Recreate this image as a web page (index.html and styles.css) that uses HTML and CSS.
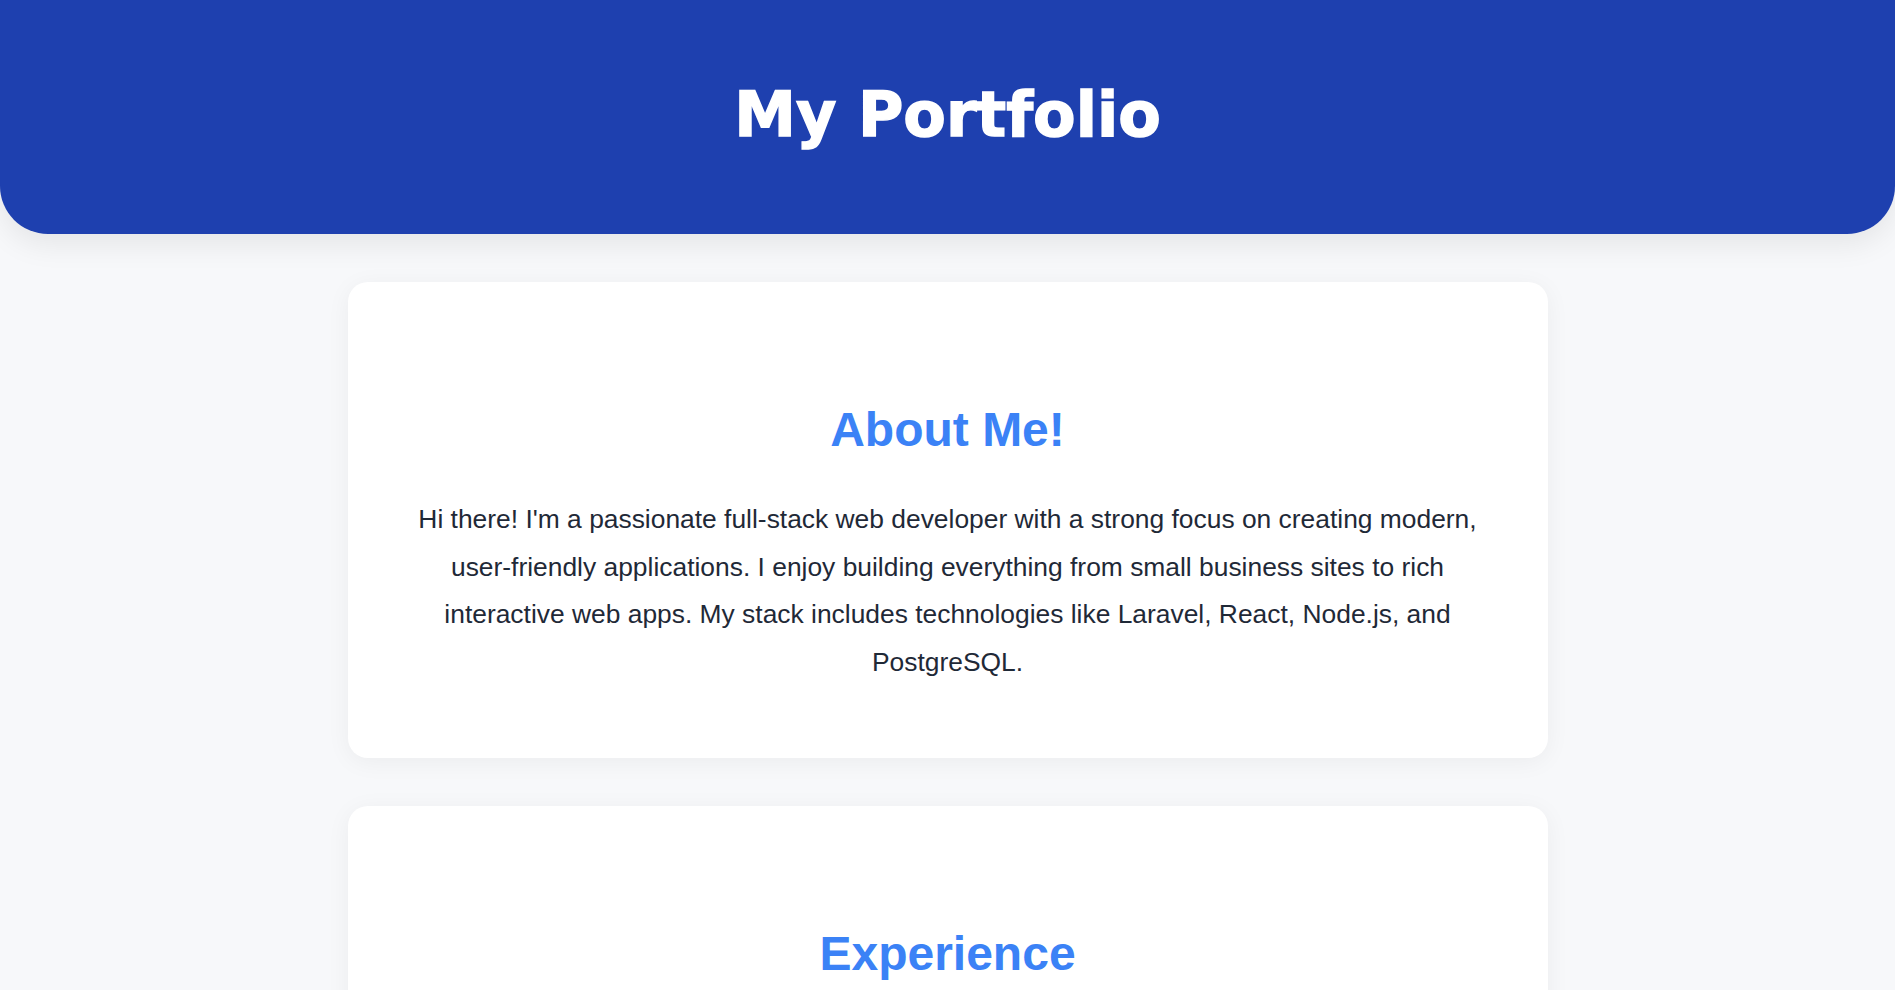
FILE: index.html
```html
<!DOCTYPE html>
<html lang="en">
<head>
<meta charset="utf-8">
<title>My Portfolio</title>
<link rel="stylesheet" href="styles.css">
</head>
<body>
<header class="site-header">
  <h1 class="site-title">My Portfolio</h1>
</header>
<main class="container">
  <section class="card">
    <h2 class="card-title">About Me!</h2>
    <p class="card-text">Hi there! I'm a passionate full-stack web developer with a strong focus on creating modern, user-friendly applications. I enjoy building everything from small business sites to rich interactive web apps. My stack includes technologies like Laravel, React, Node.js, and PostgreSQL.</p>
  </section>
  <section class="card">
    <h2 class="card-title">Experience</h2>
    <p class="card-text">Full-Stack Developer — building and maintaining web applications with Laravel, React and Node.js.</p>
  </section>
</main>
</body>
</html>
```
FILE: styles.css
```css
* { box-sizing: border-box; }

body {
  margin: 0;
  background: #f7f8fa;
  font-family: "Liberation Sans", Arial, sans-serif;
  color: #1f2937;
}

.site-header {
  height: 234px;
  background: #1e40af;
  border-radius: 0 0 48px 48px;
  box-shadow: 0 10px 30px rgba(0, 0, 0, 0.08);
  display: flex;
  align-items: center;
  justify-content: center;
  padding-bottom: 5px;
}

.site-title {
  margin: 0;
  color: #ffffff;
  font-family: "DejaVu Sans", "Liberation Sans", sans-serif;
  font-weight: 700;
  font-size: 62px;
  line-height: normal;
  -webkit-text-stroke: 1.4px #ffffff;
}

.container {
  width: 1200px;
  margin: 48px auto 0;
  display: flex;
  flex-direction: column;
  gap: 48px;
  padding-bottom: 48px;
}

.card {
  background: #ffffff;
  border-radius: 20px;
  box-shadow: 0 4px 24px rgba(0, 0, 0, 0.05);
  padding: 120px 64px 71.6px;
  text-align: center;
}

.card-title {
  margin: 0 0 39.2px;
  color: #3b82f6;
  font-size: 48px;
  font-weight: 700;
  line-height: 1.15;
}

.card-text {
  margin: 0;
  font-size: 26.4px;
  line-height: 47.5px;
  color: #1f2937;
}
```
